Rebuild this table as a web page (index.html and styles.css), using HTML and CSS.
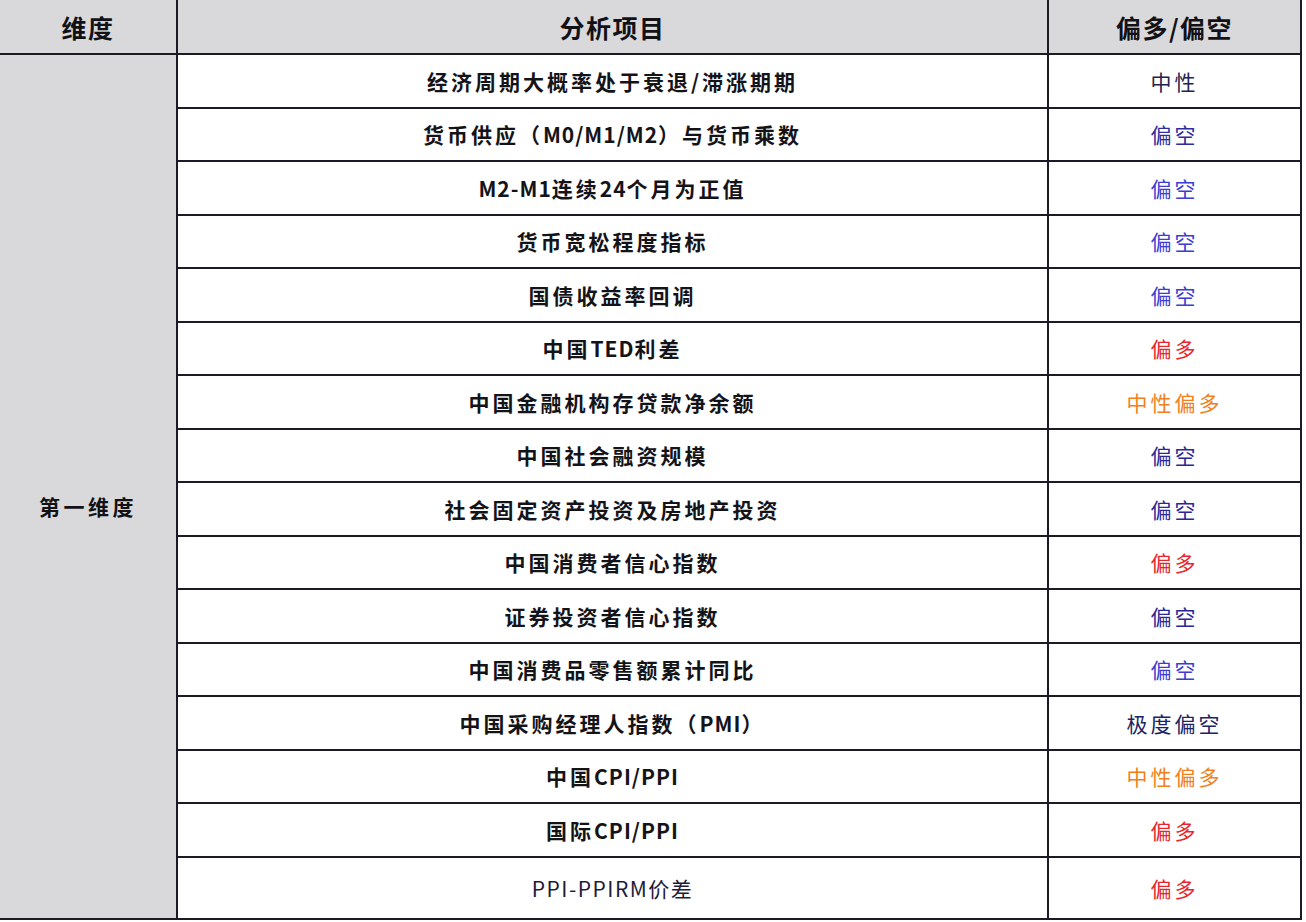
FILE: index.html
```html
<!DOCTYPE html>
<html lang="zh-CN">
<head>
<meta charset="utf-8">
<title>维度分析</title>
<link rel="stylesheet" href="styles.css">
</head>
<body>
<table class="grid">
  <colgroup>
    <col class="c-dim">
    <col class="c-item">
    <col class="c-bias">
  </colgroup>
  <thead>
    <tr class="head">
      <th class="dim">维度</th>
      <th>分析项目</th>
      <th>偏多/偏空</th>
    </tr>
  </thead>
  <tbody>
    <tr>
      <td class="dim" rowspan="16"><span class="dim-label">第一维度</span></td>
      <td class="item">经济周期大概率处于衰退/滞涨期期</td>
      <td class="bias neutral">中性</td>
    </tr>
    <tr><td class="item">货币供应（<span class="lat">M0/M1/M2</span>）与货币乘数</td><td class="bias short-mid">偏空</td></tr>
    <tr><td class="item"><span class="lat">M2-M1</span>连续<span class="lat">24</span>个月为正值</td><td class="bias short-light">偏空</td></tr>
    <tr><td class="item">货币宽松程度指标</td><td class="bias short-light">偏空</td></tr>
    <tr><td class="item">国债收益率回调</td><td class="bias short-light">偏空</td></tr>
    <tr><td class="item">中国<span class="lat">TED</span>利差</td><td class="bias long">偏多</td></tr>
    <tr><td class="item">中国金融机构存贷款净余额</td><td class="bias lean-long">中性偏多</td></tr>
    <tr><td class="item">中国社会融资规模</td><td class="bias short-dark">偏空</td></tr>
    <tr><td class="item">社会固定资产投资及房地产投资</td><td class="bias short-dark">偏空</td></tr>
    <tr><td class="item">中国消费者信心指数</td><td class="bias long">偏多</td></tr>
    <tr><td class="item">证券投资者信心指数</td><td class="bias short-dark">偏空</td></tr>
    <tr><td class="item">中国消费品零售额累计同比</td><td class="bias short-light">偏空</td></tr>
    <tr><td class="item">中国采购经理人指数（<span class="lat">PMI</span>）</td><td class="bias extreme">极度偏空</td></tr>
    <tr><td class="item">中国<span class="lat">CPI/PPI</span></td><td class="bias lean-long">中性偏多</td></tr>
    <tr><td class="item">国际<span class="lat">CPI/PPI</span></td><td class="bias long">偏多</td></tr>
    <tr class="last"><td class="item plain">PPI-PPIRM价差</td><td class="bias long">偏多</td></tr>
  </tbody>
</table>
</body>
</html>
```

FILE: styles.css
```css
html, body {
  margin: 0;
  padding: 0;
  background: #ffffff;
}

body {
  font-family: "Noto Sans CJK SC", "Noto Sans", sans-serif;
  color: #121218;
}

.grid {
  width: 1301px;
  table-layout: fixed;
  border-collapse: collapse;
  border-spacing: 0;
}

.c-dim { width: 177px; }
.c-item { width: 871px; }
.c-bias { width: 253px; }

.grid th,
.grid td {
  border: 2px solid #1d1a28;
  padding: 0;
  text-align: center;
  vertical-align: middle;
}

.head th {
  height: 53px;
  border-top: none;
  background: #d9d9db;
  font-size: 25px;
  font-weight: 700;
  letter-spacing: 1.5px;
  color: #111116;
}

.grid th.dim,
.grid td.dim {
  border-left: none;
}

td.dim {
  background: #d9d9db;
  vertical-align: top;
}

.dim-label {
  display: block;
  padding-top: 436px;
  font-size: 21px;
  font-weight: 700;
  letter-spacing: 3.5px;
  color: #111116;
}

tbody tr {
  height: 53.5px;
}

tbody tr.last {
  height: 62px;
}

.item {
  font-size: 21px;
  font-weight: 700;
  letter-spacing: 3px;
  color: #141418;
}

.item .lat {
  letter-spacing: 1px;
}

.item.plain {
  font-size: 21px;
  font-weight: 400;
  color: #1e1c3a;
  letter-spacing: 1.5px;
}

.bias {
  font-size: 21px;
  font-weight: 400;
  letter-spacing: 3px;
}

.neutral { color: #23234f; }
.short-mid { color: #2f2c9c; }
.short-light { color: #3d3dd2; }
.short-dark { color: #2a2896; }
.long { color: #e6262e; }
.lean-long { color: #f0801e; }
.extreme { color: #1c2366; }
```
